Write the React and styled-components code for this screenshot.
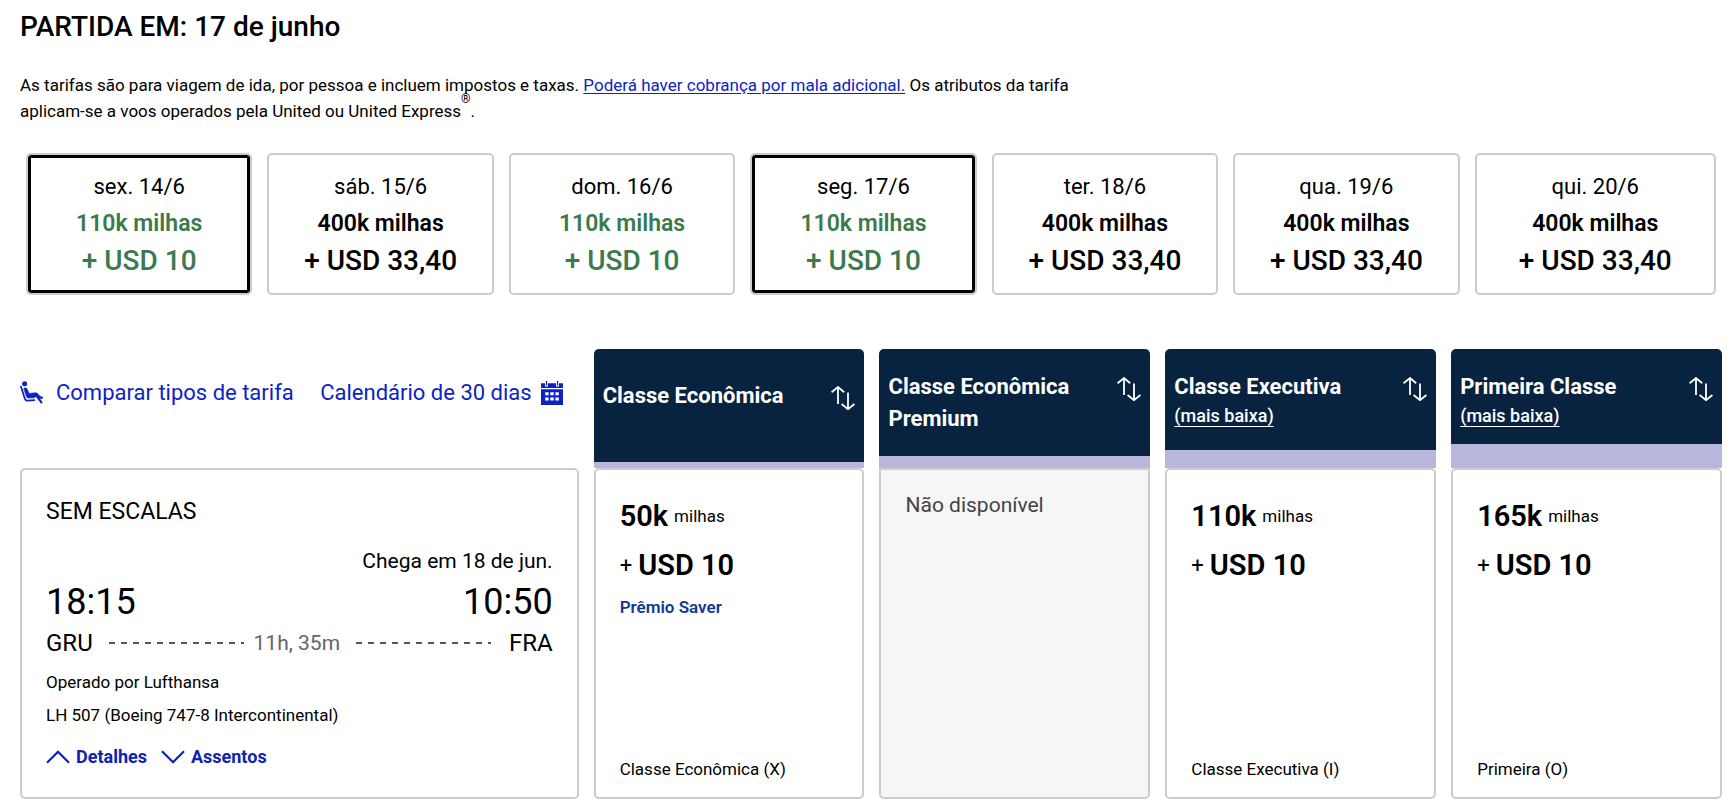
import styled, { createGlobalStyle } from "styled-components";

const dates = [
  { day: "sex. 14/6", miles: "110k milhas", tax: "+ USD 10", cheap: true, outlined: true },
  { day: "sáb. 15/6", miles: "400k milhas", tax: "+ USD 33,40" },
  { day: "dom. 16/6", miles: "110k milhas", tax: "+ USD 10", cheap: true },
  { day: "seg. 17/6", miles: "110k milhas", tax: "+ USD 10", cheap: true, outlined: true },
  { day: "ter. 18/6", miles: "400k milhas", tax: "+ USD 33,40" },
  { day: "qua. 19/6", miles: "400k milhas", tax: "+ USD 33,40" },
  { day: "qui. 20/6", miles: "400k milhas", tax: "+ USD 33,40" },
];

const cabins = [
  { name: "Classe Econômica", stripe: 6, low: true },
  { name: "Classe Econômica Premium", stripe: 12 },
  { name: "Classe Executiva", note: "(mais baixa)", stripe: 18 },
  { name: "Primeira Classe", note: "(mais baixa)", stripe: 24 },
];

const fares = [
  { miles: "50k", tax: "USD 10", award: "Prêmio Saver", cabin: "Classe Econômica (X)" },
  null,
  { miles: "110k", tax: "USD 10", cabin: "Classe Executiva (I)" },
  { miles: "165k", tax: "USD 10", cabin: "Primeira (O)" },
];

function SeatIcon() {
  return (
    <svg width="24" height="24" viewBox="0 0 24 24" fill="none" stroke="currentColor" strokeLinecap="round" strokeLinejoin="round" aria-hidden="true">
      <circle cx="4.6" cy="2.8" r="2.5" fill="currentColor" stroke="none" />
      <path d="M0.9 5.6L4.8 17.4Q5.6 19.8 8 19.7L14.4 19.2" strokeWidth="1.7" />
      <path d="M3.8 7.4Q5.8 5.8 7 7.8L9.2 12.4L15.4 11.8Q16.8 11.6 17.8 12.8L20 15.2L22.8 16.2L22.2 17.8L19 17L16.4 15L14.6 16.8L8.2 17Q7 17 6.5 15.8Z" fill="currentColor" strokeWidth="0.6" />
      <path d="M17 15.4L21.4 21.4" strokeWidth="2.2" />
    </svg>
  );
}

function CalendarIcon() {
  return (
    <svg width="24" height="24" viewBox="0 0 24 24" fill="currentColor" aria-hidden="true">
      <path d="M1 2.2H5V5.4H8V2.2H16V5.4H19V2.2H23V7H1Z" />
      <path d="M5.9 0H7.2V4.4H5.9ZM16.9 0H18.2V4.4H16.9Z" />
      <path
        fillRule="evenodd"
        d="M1 8.2H23V24H1ZM5.2 11.2V14.2H8.6V11.2ZM10.3 11.2V14.2H13.7V11.2ZM15.4 11.2V14.2H18.8V11.2ZM5.2 16.6V19.6H8.6V16.6ZM10.3 16.6V19.6H13.7V16.6ZM15.4 16.6V19.6H18.8V16.6Z"
      />
    </svg>
  );
}

function SortIcon() {
  return (
    <svg width="24" height="24" viewBox="0 0 24 24" fill="none" stroke="currentColor" strokeWidth="1.8" aria-hidden="true">
      <path d="M0.6 6.2L7 1L13.2 6.2M7 1.2V18" />
      <path d="M10.6 18L17 23.2L23.4 18M17 23V6.4" />
    </svg>
  );
}

function Chevron({ up }) {
  return (
    <svg width="24" height="14" viewBox="0 0 24 14" fill="none" stroke="currentColor" strokeWidth="2.2" aria-hidden="true">
      <path d={up ? "M1 12.8L12 1.8L23 12.8" : "M1 1.2L12 12.2L23 1.2"} />
    </svg>
  );
}

function DatePicker() {
  return (
    <DateRow>
      {dates.map((date) => (
        <DateButton key={date.day} type="button" $outlined={date.outlined}>
          <Day>{date.day}</Day>
          <Miles $cheap={date.cheap}>{date.miles}</Miles>
          <Tax $cheap={date.cheap}>{date.tax}</Tax>
        </DateButton>
      ))}
    </DateRow>
  );
}

function CabinHeader({ cabin }) {
  return (
    <CabinCell scope="col" $stripe={cabin.stripe} $low={cabin.low}>
      <CabinContent>
        <div>
          <CabinName>{cabin.name}</CabinName>
          {cabin.note && <CabinNote type="button">{cabin.note}</CabinNote>}
        </div>
        <SortButton type="button" aria-label={`Ordenar por ${cabin.name}`}>
          <SortIcon />
        </SortButton>
      </CabinContent>
    </CabinCell>
  );
}

function Fare({ fare }) {
  if (!fare) {
    return (
      <FareCell $empty>
        <Unavailable>Não disponível</Unavailable>
      </FareCell>
    );
  }

  return (
    <FareCell>
      <PriceLine>
        <Price>{fare.miles}</Price>
        <span>milhas</span>
      </PriceLine>
      <PriceLine>
        <Plus>+</Plus>
        <Price>{fare.tax}</Price>
      </PriceLine>
      {fare.award && <Award>{fare.award}</Award>}
      <FareCabin>{fare.cabin}</FareCabin>
    </FareCell>
  );
}

function Flight() {
  return (
    <FlightCell>
      <Stops>SEM ESCALAS</Stops>
      <Arrival>Chega em 18 de jun.</Arrival>
      <Times>
        <span>18:15</span>
        <span>10:50</span>
      </Times>
      <Route>
        <span>GRU</span>
        <Dashes />
        <Duration>11h, 35m</Duration>
        <Dashes />
        <Destination>FRA</Destination>
      </Route>
      <Info>Operado por Lufthansa</Info>
      <Info>LH 507 (Boeing 747-8 Intercontinental)</Info>
      <Toggles>
        <Toggle type="button">
          <Chevron up />
          Detalhes
        </Toggle>
        <Toggle type="button">
          <Chevron />
          Assentos
        </Toggle>
      </Toggles>
    </FlightCell>
  );
}

function App() {
  return (
    <Page>
      <GlobalStyle />
      <Title>PARTIDA EM: 17 de junho</Title>
      <Notice>
        As tarifas são para viagem de ida, por pessoa e incluem impostos e taxas.{" "}
        <a href="#bagagem">Poderá haver cobrança por mala adicional.</a> Os atributos da tarifa
        aplicam-se a voos operados pela United ou United Express<sup>®</sup>.
      </Notice>
      <DatePicker />
      <FareTable>
        <thead>
          <TableRow>
            <ToolsCell>
              <Tools>
                <ToolLink href="#comparar">
                  <SeatIcon />
                  Comparar tipos de tarifa
                </ToolLink>
                <ToolLink href="#calendario" $tight>
                  Calendário de 30 dias
                  <CalendarIcon />
                </ToolLink>
              </Tools>
            </ToolsCell>
            {cabins.map((cabin) => (
              <CabinHeader key={cabin.name} cabin={cabin} />
            ))}
          </TableRow>
        </thead>
        <tbody>
          <TableRow>
            <Flight />
            {fares.map((fare, i) => (
              <Fare key={cabins[i].name} fare={fare} />
            ))}
          </TableRow>
        </tbody>
      </FareTable>
    </Page>
  );
}

const GlobalStyle = createGlobalStyle`
  * {
    box-sizing: border-box;
  }

  body {
    margin: 0;
    background-color: #fff;
    color: #000;
    font-family: Roboto, "Liberation Sans", sans-serif;
    font-size: 17px;
    line-height: 26px;
  }

  button {
    margin: 0;
    padding: 0;
    border: none;
    background: none;
    color: inherit;
    font: inherit;
    cursor: pointer;
  }

  svg {
    display: block;
    flex-shrink: 0;
  }
`;

const Page = styled.main`
  padding: 8px 10px 8px 20px;
`;

const Title = styled.h1`
  margin: 0;
  font-size: 28px;
  font-weight: 500;
  line-height: 38px;
`;

const Notice = styled.p`
  max-width: 1080px;
  margin: 26px 0 0;

  a {
    color: #0c23c4;
    text-underline-offset: 2px;
  }

  sup {
    font-size: 12px;
    font-weight: 500;
    line-height: 0; /* So it doesn't push the lines apart */
    vertical-align: 14px;
  }
`;

const DateRow = styled.div`
  display: grid;
  grid-template-columns: repeat(7, 1fr);
  margin: 29px 6px 0;
`;

const DateButton = styled.button`
  display: flex;
  flex-direction: column;
  align-items: center;
  height: 142px;
  margin-right: 15px;
  padding-top: 14px;
  border: 2px solid #ccc;
  border-radius: 5px;
  box-shadow: ${(props) => (props.$outlined ? "inset 0 0 0 3px #000" : "none")};

  &:last-child {
    margin-right: 0;
  }
`;

const Day = styled.span`
  font-size: 22px;
  line-height: 36px;
`;

const Miles = styled.span`
  color: ${(props) => (props.$cheap ? "#3b7a4c" : "inherit")};
  font-size: 23px;
  font-weight: 600;
  line-height: 38px;
`;

const Tax = styled(Miles)`
  font-size: 28px;
  font-weight: 500;
  line-height: 36px;
`;

const FareTable = styled.table`
  display: block;
  margin-top: 54px;
  border-spacing: 0;

  thead,
  tbody {
    display: block;
  }
`;

const TableRow = styled.tr`
  display: grid;
  grid-template-columns: 559fr repeat(4, 271fr);
  column-gap: 15px;
`;

const ToolsCell = styled.td`
  padding: 0;
`;

const Tools = styled.div`
  display: flex;
  justify-content: space-between;
  padding: 27px 15px 0 0;
`;

const ToolLink = styled.a`
  display: flex;
  align-items: center;
  gap: ${(props) => (props.$tight ? "8px" : "12px")};
  color: #0c23c4;
  font-size: 22px;
  line-height: 34px;
  text-decoration: none;
`;

const CabinCell = styled.th`
  height: 119px;
  padding: ${(props) => (props.$low ? "31px" : "22px")} 9px 0;
  border-bottom: ${(props) => props.$stripe}px solid #b7b7db;
  border-radius: 5px 5px 0 0;
  background-color: #082340;
  color: #fff;
  text-align: left;
`;

const CabinContent = styled.div`
  display: flex;
  justify-content: space-between;
  gap: 16px;
`;

const CabinName = styled.div`
  font-size: 22px;
  font-weight: 700;
  line-height: 32px;
`;

const CabinNote = styled.button`
  display: block;
  font-size: 18px;
  font-weight: 500;
  text-decoration: underline;
  text-underline-offset: 4px;
`;

const SortButton = styled.button`
  align-self: flex-start;
  padding-top: 6px;
`;

const Cell = styled.td`
  display: flex;
  flex-direction: column;
  min-height: 331px;
  padding: 24px;
  border: 2px solid #ccc;
  border-radius: 5px;
`;

const FlightCell = styled(Cell)`
  font-size: 21px;
`;

const Stops = styled.div`
  font-size: 23px;
  line-height: 36px;
`;

const Arrival = styled.div`
  margin-top: 15px;
  line-height: 32px;
  text-align: right;
`;

const Times = styled.div`
  display: flex;
  justify-content: space-between;
  font-size: 36px;
  line-height: 50px;
`;

const Route = styled.div`
  display: flex;
  align-items: center;
  gap: 10px;
  margin-bottom: 3px;
  font-size: 24px;
  line-height: 32px;
`;

const Dashes = styled.span`
  flex: 1;
  height: 2px;
  margin-left: 6px;
  background: repeating-linear-gradient(to right, #555 0 6px, transparent 6px 12px);
`;

const Duration = styled.span`
  color: #666;
  font-size: 21px;
`;

const Destination = styled.span`
  margin-left: 8px;
`;

const Info = styled.div`
  margin-top: 7px;
  font-size: 17px;
`;

const Toggles = styled.div`
  display: flex;
  gap: 14px;
  margin-top: 16px;
`;

const Toggle = styled.button`
  display: flex;
  align-items: center;
  gap: 6px;
  color: #0c23b4;
  font-size: 18px;
  font-weight: 700;
`;

const FareCell = styled(Cell)`
  padding: 22px 24px 15px;
  border-radius: ${(props) => (props.$empty ? "0 0 5px 5px" : "5px")};
  background-color: ${(props) => (props.$empty ? "#f6f6f6" : "#fff")};
`;

const PriceLine = styled.div`
  display: flex;
  align-items: center;
  gap: 6px;
  line-height: 49px;
`;

const Price = styled.span`
  font-size: 29px;
  font-weight: 600;
`;

const Plus = styled.span`
  font-size: 22px;
`;

const Award = styled.div`
  margin-top: 4px;
  color: #123a94;
  font-weight: 600;
`;

const FareCabin = styled.div`
  margin-top: auto;
`;

const Unavailable = styled.span`
  color: #444;
  font-size: 21px;
`;

export default App;
